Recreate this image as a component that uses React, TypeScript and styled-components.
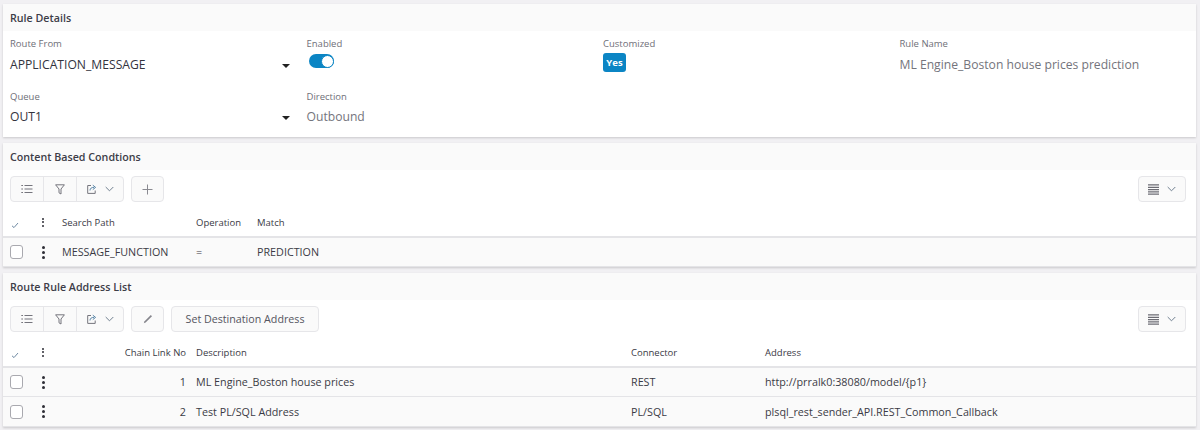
import React from "react";
import styled, { createGlobalStyle } from "styled-components";

const Global = createGlobalStyle`
  html, body { margin: 0; padding: 0; background: #f1f0f3; width: 1200px; height: 430px; overflow: hidden; }
  body { font-family: "Open Sans", "Liberation Sans", sans-serif; color: #3a3a45; }
`;

const Page = styled.div`
  display: flex;
  flex-direction: column;
  gap: 6px;
  padding: 4px 4px 0 3px;
`;
const Panel = styled.section`
  background: #fff;
  box-shadow: 0 1px 2px rgba(0, 0, 0, 0.16);
`;
const PanelTitle = styled.h2`
  margin: 0;
  height: 27px;
  padding-left: 7px;
  display: flex;
  align-items: center;
  background: #fafafa;
  font-size: 10.7px;
  font-weight: 600;
  color: #3d3d48;
`;
const FormGrid = styled.div`
  display: grid;
  grid-template-columns: repeat(4, 296.5px);
  grid-auto-rows: 52.5px;
  padding: 5px 0 0 7px;
  height: 101px;
`;
const Field = styled.div`
  display: flex;
  flex-direction: column;
`;
const Label = styled.div`
  font-size: 9.5px;
  height: 14px;
  line-height: 15px;
  color: #6f6f78;
`;
const SelectValue = styled.div`
  display: flex;
  align-items: center;
  justify-content: space-between;
  width: 280px;
  height: 28px;
  font-size: 12.15px;
  color: #33333d;
`;
const Caret = styled.span`
  width: 0;
  height: 0;
  margin-top: 3px;
  border-left: 4px solid transparent;
  border-right: 4px solid transparent;
  border-top: 4px solid #222;
`;
const ReadValue = styled.div`
  height: 28px;
  display: flex;
  align-items: center;
  font-size: 12.15px;
  color: #74747c;
`;
const Toggle = styled.div`
  width: 25px;
  height: 14px;
  margin: 4px 0 0 2px;
  border-radius: 7px;
  background: #0b85c4;
  display: flex;
  justify-content: flex-end;
  align-items: center;
`;
const Knob = styled.span`
  width: 13px;
  height: 13px;
  border-radius: 50%;
  background: #fff;
  border: 1px solid #0b85c4;
  box-sizing: border-box;
`;
const Badge = styled.span`
  align-self: flex-start;
  margin-top: 3px;
  width: 23px;
  height: 19px;
  border-radius: 3px;
  background: #0b85c4;
  color: #fff;
  font-size: 9.5px;
  font-weight: 700;
  display: flex;
  align-items: center;
  justify-content: center;
`;
const Toolbar = styled.div`
  height: 26px;
  padding: 6px 10px 0 7px;
  display: flex;
  gap: 7px;
`;
const BtnGroup = styled.div`
  display: flex;
  height: 26px;
  box-sizing: border-box;
  border: 1px solid #e6e6e9;
  border-radius: 4px;
  background: #fafafa;
`;
const Seg = styled.div<{ $w: number }>`
  width: ${(p) => p.$w}px;
  display: flex;
  align-items: center;
  justify-content: center;
  gap: 8px;
  box-sizing: border-box;
  & + & { border-left: 1px solid #e6e6e9; }
`;
const TextButton = styled(BtnGroup)`
  width: 148px;
  justify-content: center;
  align-items: center;
  font-size: 10.7px;
  color: #55555f;
`;
const Spacer = styled.div`
  flex: 1;
`;
const Row = styled.div<{ $cols: string; $head?: boolean; $h: number }>`
  display: grid;
  grid-template-columns: ${(p) => p.$cols};
  align-items: center;
  height: ${(p) => p.$h}px;
  box-sizing: border-box;
  padding: ${(p) => (p.$head ? "6px" : "0")} 0 0 7px;
  font-size: ${(p) => (p.$head ? "9.5px" : "10.75px")};
  color: #3a3a45;
  background: ${(p) => (p.$head ? "#fff" : "#fafafa")};
  border-bottom: ${(p) => (p.$head ? "2px solid #e4e4e7" : "1px solid #e4e4e7")};
`;
const HeadCheck = styled.div`
  display: flex;
  padding: 6px 0 0 1px;
`;
const Box = styled.span`
  display: block;
  width: 13px;
  height: 14px;
  box-sizing: border-box;
  border: 1px solid #a9a9af;
  border-radius: 3px;
  background: #fff;
`;
const Dots = styled.div<{ $small?: boolean }>`
  display: flex;
  flex-direction: column;
  gap: ${(p) => (p.$small ? "1.5px" : "2px")};
  width: 3px;
  margin-left: -1px;
  & > i {
    display: block;
    width: ${(p) => (p.$small ? "2px" : "3px")};
    height: ${(p) => (p.$small ? "2px" : "3px")};
    border-radius: 50%;
    background: #2e2e36;
  }
`;
const Right = styled.div`
  text-align: right;
  padding-right: 10px;
`;
const Kebab = ({ small }: { small?: boolean }) => (
  <Dots $small={small}>
    <i />
    <i />
    <i />
  </Dots>
);

const ico = { fill: "none", stroke: "#75757d", strokeWidth: 1 };
const ListIcon = () => (
  <svg width="12" height="10" viewBox="0 0 12 10" {...ico}>
    <path d="M3.5 1.5H11.5M3.5 5H11.5M3.5 8.5H11.5" />
    <path d="M.5 1.5H1.7M.5 5H1.7M.5 8.5H1.7" stroke="#3b3b44" />
  </svg>
);
const FilterIcon = () => (
  <svg width="10" height="11" viewBox="0 0 10 11" {...ico}>
    <path d="M.6.8H9.4L6 5v5L4 8.8V5Z" />
  </svg>
);
const ExportIcon = () => (
  <svg width="10" height="10" viewBox="0 0 10 10" {...ico}>
    <path d="M4 1.5H.7V9.4H8.2V6.5" />
    <path d="M3 6.5C3 4.3 4.5 3.4 7 3.4M5.8 1.2 8.6 3.4 5.8 5.6" stroke="#5a86a8" />
  </svg>
);
const Chevron = () => (
  <svg width="9" height="6" viewBox="0 0 9 6" fill="none" stroke="#6f7f8f" strokeWidth="1">
    <path d="M.7 1 4.5 4.8 8.3 1" />
  </svg>
);
const PlusIcon = () => (
  <svg width="11" height="11" viewBox="0 0 11 11" fill="none" stroke="#8a8a91" strokeWidth="1">
    <path d="M5.5.5V10.5M.5 5.5H10.5" />
  </svg>
);
const PencilIcon = () => (
  <svg width="10" height="10" viewBox="0 0 10 10" fill="#85858c">
    <path d="M7.8 1 9 2.2 2.6 8.4.8 9.2 1.6 7.3Z" />
  </svg>
);
const LinesIcon = () => (
  <svg width="11" height="11" viewBox="0 0 11 11" stroke="#6c6c74" strokeWidth="1.2">
    <path d="M0 .8H11M0 3.3H11M0 5.6H11M0 7.9H11M0 10.2H11" />
  </svg>
);
const TickIcon = () => (
  <svg width="8" height="7" viewBox="0 0 8 7" fill="none" stroke="#6f8aa3" strokeWidth="1">
    <path d="M1 3.8 3 5.6 7 1" />
  </svg>
);
const GridTools = () => (
  <BtnGroup>
    <Seg $w={32}><ListIcon /></Seg>
    <Seg $w={33}><FilterIcon /></Seg>
    <Seg $w={47}><ExportIcon /><Chevron /></Seg>
  </BtnGroup>
);
const ViewMenu = () => (
  <BtnGroup>
    <Seg $w={46}><LinesIcon /><Chevron /></Seg>
  </BtnGroup>
);

const condCols = "33px 19px 134px 61px 1fr";
const addrCols = "33px 19px 134px 435px 134px 1fr";

export default function App() {
  return (
    <Page>
      <Global />
      <Panel>
        <PanelTitle>Rule Details</PanelTitle>
        <FormGrid>
          <Field>
            <Label>Route From</Label>
            <SelectValue>APPLICATION_MESSAGE<Caret /></SelectValue>
          </Field>
          <Field>
            <Label>Enabled</Label>
            <Toggle><Knob /></Toggle>
          </Field>
          <Field>
            <Label>Customized</Label>
            <Badge>Yes</Badge>
          </Field>
          <Field>
            <Label>Rule Name</Label>
            <ReadValue>ML Engine_Boston house prices prediction</ReadValue>
          </Field>
          <Field>
            <Label>Queue</Label>
            <SelectValue>OUT1<Caret /></SelectValue>
          </Field>
          <Field>
            <Label>Direction</Label>
            <ReadValue>Outbound</ReadValue>
          </Field>
        </FormGrid>
      </Panel>

      <Panel>
        <PanelTitle>Content Based Condtions</PanelTitle>
        <Toolbar>
          <GridTools />
          <BtnGroup><Seg $w={31}><PlusIcon /></Seg></BtnGroup>
          <Spacer />
          <ViewMenu />
        </Toolbar>
        <Row $head $h={36} $cols={condCols}>
          <HeadCheck><TickIcon /></HeadCheck>
          <Kebab small />
          <div>Search Path</div>
          <div>Operation</div>
          <div>Match</div>
        </Row>
        <Row $h={29} $cols={condCols}>
          <Box />
          <Kebab />
          <div>MESSAGE_FUNCTION</div>
          <div>=</div>
          <div>PREDICTION</div>
        </Row>
      </Panel>

      <Panel>
        <PanelTitle>Route Rule Address List</PanelTitle>
        <Toolbar>
          <GridTools />
          <BtnGroup><Seg $w={31}><PencilIcon /></Seg></BtnGroup>
          <TextButton>Set Destination Address</TextButton>
          <Spacer />
          <ViewMenu />
        </Toolbar>
        <Row $head $h={36} $cols={addrCols}>
          <HeadCheck><TickIcon /></HeadCheck>
          <Kebab small />
          <Right>Chain Link No</Right>
          <div>Description</div>
          <div>Connector</div>
          <div>Address</div>
        </Row>
        <Row $h={29} $cols={addrCols}>
          <Box />
          <Kebab />
          <Right>1</Right>
          <div>ML Engine_Boston house prices</div>
          <div>REST</div>
          <div>http://prralk0:38080/model/{"{p1}"}</div>
        </Row>
        <Row $h={30} $cols={addrCols}>
          <Box />
          <Kebab />
          <Right>2</Right>
          <div>Test PL/SQL Address</div>
          <div>PL/SQL</div>
          <div>plsql_rest_sender_API.REST_Common_Callback</div>
        </Row>
      </Panel>
    </Page>
  );
}
